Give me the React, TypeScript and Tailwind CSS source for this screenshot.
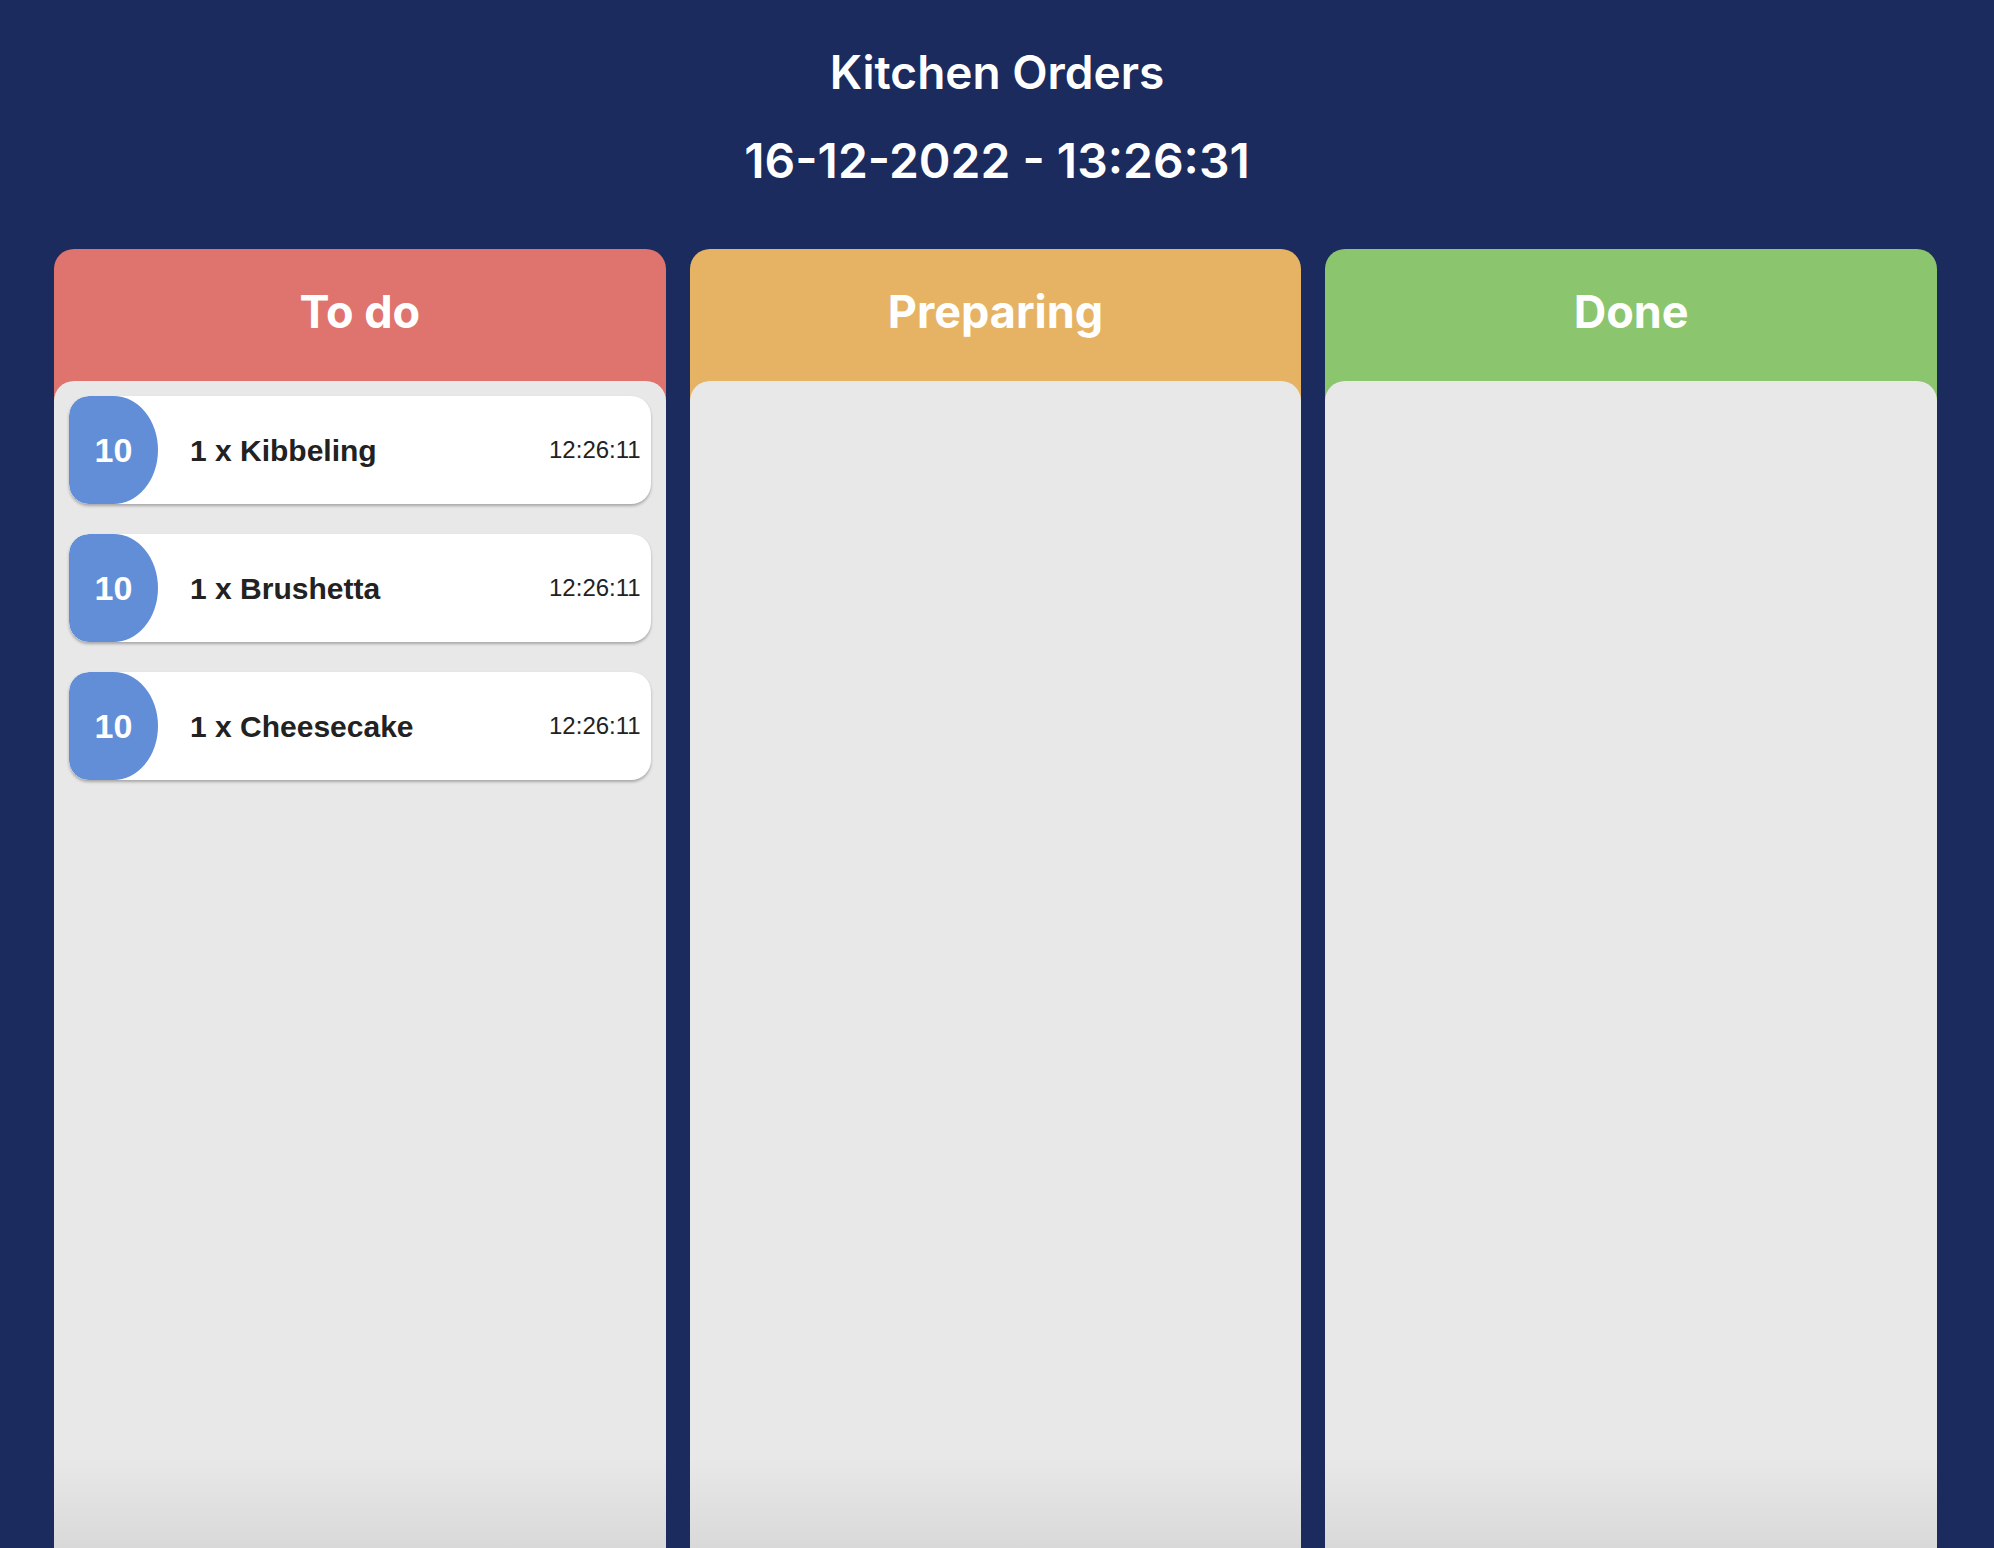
import React from "react";

const orders = [
  { table: 10, name: "1 x Kibbeling", time: "12:26:11" },
  { table: 10, name: "1 x Brushetta", time: "12:26:11" },
  { table: 10, name: "1 x Cheesecake", time: "12:26:11" },
];

function Card({ table, name, time }: { table: number; name: string; time: string }) {
  return (
    <div className="flex h-[108px] items-stretch overflow-hidden rounded-[20px] bg-white shadow-[0_2px_3px_rgba(0,0,0,0.28)] font-['Liberation_Sans',Arial,sans-serif]">
      <div className="flex w-[89px] shrink-0 items-center justify-center rounded-l-[20px] rounded-r-[50%] bg-[#628ed8] text-[34px] font-bold text-white">
        {table}
      </div>
      <div className="ml-[32px] flex-1 text-[30px] font-bold text-[#222222]">
        <div className="flex h-full items-center">{name}</div>
      </div>
      <div className="flex items-center pr-[10px] text-[24px] text-[#222222]">{time}</div>
    </div>
  );
}

function Column({
  title,
  headerClass,
  children,
}: {
  title: string;
  headerClass: string;
  children?: React.ReactNode;
}) {
  return (
    <div className={`flex h-full flex-col rounded-t-[20px] ${headerClass}`}>
      <div className="pt-[40px] pb-[47px] text-center text-[45px] font-bold leading-none text-white font-['Inter',sans-serif]">
        {title}
      </div>
      <div className="flex flex-1 flex-col gap-[30px] rounded-t-[20px] bg-[linear-gradient(to_bottom,#e8e8e8_calc(100%-90px),#d9d9d9_100%)] px-[15px] pt-[15px]">
        {children}
      </div>
    </div>
  );
}

export default function App() {
  return (
    <div className="flex h-screen flex-col overflow-hidden bg-[#1b2b5e] font-['Inter',sans-serif]">
      <div className="h-[95px] pt-[49px] text-center text-[46px] font-semibold leading-none text-white">Kitchen Orders</div>
      <div className="h-[89px] pt-[42px] text-center text-[48px] font-semibold leading-none text-white">
        16-12-2022 - 13:26:31
      </div>
      <div className="mt-[65px] grid flex-1 grid-cols-3 gap-[24px] pl-[54px] pr-[57px]">
        <Column title="To do" headerClass="bg-[#df736d]">
          {orders.map((o) => (
            <Card key={o.name} {...o} />
          ))}
        </Column>
        <Column title="Preparing" headerClass="bg-[#e5b363]" />
        <Column title="Done" headerClass="bg-[#8bc56e]" />
      </div>
    </div>
  );
}
